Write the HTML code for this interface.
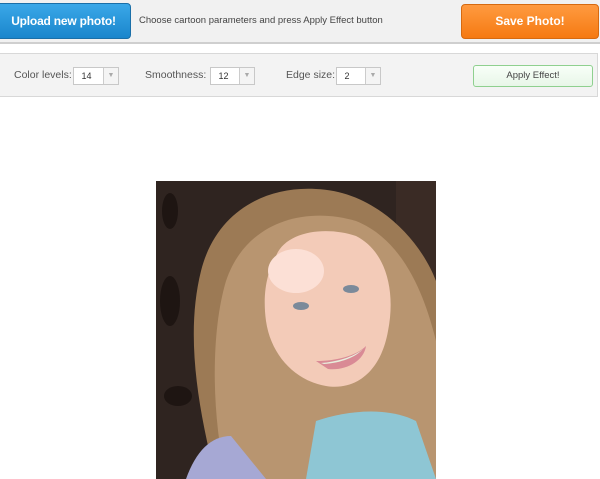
<!DOCTYPE html>
<html><head><style>
body{margin:0;width:600px;height:479px;overflow:hidden;background:#fff;font-family:"Liberation Sans",Tahoma,sans-serif;position:relative}
.top{position:absolute;left:0;top:0;width:600px;height:42px;background:#f1f1f1;border-bottom:2px solid #cfcfcf}
.up{position:absolute;left:-4px;top:3px;width:133px;height:34px;border-radius:4px;background:linear-gradient(#3aa8e8,#1a86cc);border:1px solid #1a6fa8;color:#fff;font-weight:bold;font-size:12px;line-height:34px;text-align:center;letter-spacing:-0.2px}
.msg{position:absolute;left:139px;top:15px;font-size:9.5px;color:#444}
.save{position:absolute;left:461px;top:4px;width:136px;height:33px;border-radius:4px;background:linear-gradient(#ff9a40,#f57a12);border:1px solid #d66a10;color:#fff;font-weight:bold;font-size:12px;line-height:33px;text-align:center}
.bar{position:absolute;left:0;top:53px;width:597px;height:42px;background:#f3f3f3;border:1px solid #d8d8d8;border-left:none}
.lbl{position:absolute;top:15px;font-size:10.5px;color:#555}
.sel{position:absolute;top:13px;height:16px;border:1px solid #c8c8c8;background:#fff;font-size:9px;line-height:16px;color:#333}
.sel span{position:absolute;right:0;top:0;width:14px;height:16px;border-left:1px solid #ccc;background:#f4f4f4;color:#aaa;font-size:7px;text-align:center}
.apply{position:absolute;left:473px;top:11px;width:118px;height:20px;border:1px solid #8fd08f;border-radius:3px;background:linear-gradient(#f8fff8,#e8f6e8);font-size:9.5px;line-height:20px;text-align:center;color:#444}
.pic{position:absolute;left:156px;top:181px;width:280px;height:298px}
</style></head><body>
<div class="top"><div class="up">Upload new photo!</div><div class="msg">Choose cartoon parameters and press Apply Effect button</div><div class="save">Save Photo!</div></div>
<div class="bar">
<div class="lbl" style="left:14px">Color levels:</div><div class="sel" style="left:73px;width:44px">&nbsp;&nbsp;&nbsp;14<span>▼</span></div>
<div class="lbl" style="left:145px">Smoothness:</div><div class="sel" style="left:210px;width:43px">&nbsp;&nbsp;&nbsp;12<span>▼</span></div>
<div class="lbl" style="left:286px">Edge size:</div><div class="sel" style="left:336px;width:43px">&nbsp;&nbsp;&nbsp;2<span>▼</span></div>
<div class="apply">Apply Effect!</div></div>
<svg class="pic" viewBox="0 0 280 298">
<rect width="280" height="298" fill="#2f2420"/>
<rect x="240" width="40" height="120" fill="#3a2b25"/>
<ellipse cx="14" cy="30" rx="8" ry="18" fill="#1e1512"/>
<ellipse cx="14" cy="120" rx="10" ry="25" fill="#1e1512"/>
<ellipse cx="22" cy="215" rx="14" ry="10" fill="#1e1512"/>
<path d="M60 298 C40 220 30 150 45 90 C60 30 110 5 160 8 C220 10 265 60 280 100 L280 298 Z" fill="#9c7a55"/>
<path d="M70 298 C55 230 55 150 70 100 C90 40 150 25 200 40 C250 60 270 120 280 160 L280 298 Z" fill="#b89570"/>
<path d="M30 298 C40 270 55 255 75 255 L110 298 Z" fill="#a6a8d4"/>
<path d="M150 298 L160 240 C190 230 230 225 260 240 L280 298 Z" fill="#8ec6d4"/>
<path d="M120 75 C130 50 170 45 200 55 C230 70 240 110 232 150 C225 190 200 210 170 205 C140 200 115 175 110 140 C106 110 112 90 120 75 Z" fill="#f3cbb8"/>
<ellipse cx="140" cy="90" rx="28" ry="22" fill="#fce0d6"/>
<ellipse cx="145" cy="125" rx="8" ry="4" fill="#7b8a9a"/>
<ellipse cx="195" cy="108" rx="8" ry="4" fill="#7b8a9a"/>
<path d="M160 180 C180 180 200 175 210 165 C208 180 190 190 172 188 Z" fill="#d98a95"/>
<path d="M165 182 C180 181 198 176 207 168 C200 176 185 182 168 183 Z" fill="#e8eedd"/>
</svg>
</body></html>
